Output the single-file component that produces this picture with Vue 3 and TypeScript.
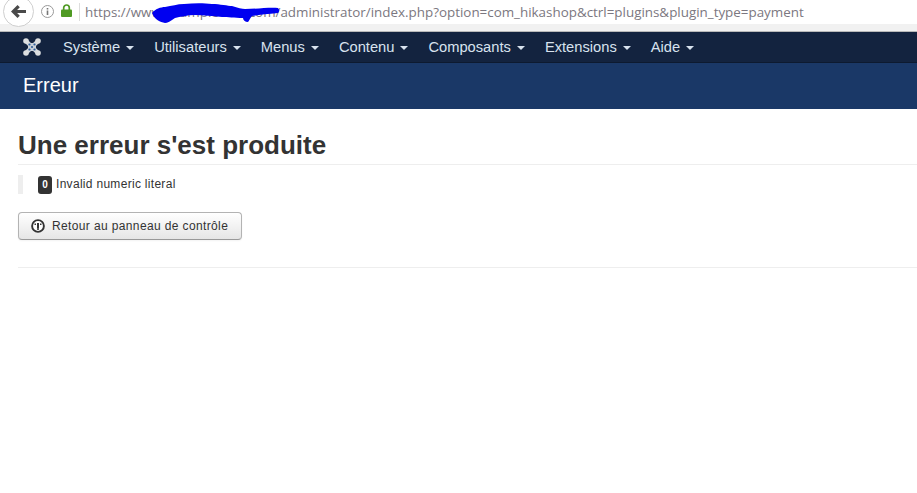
<script setup lang="ts">
const menus: string[] = ['Système', 'Utilisateurs', 'Menus', 'Contenu', 'Composants', 'Extensions', 'Aide']
</script>

<template>
  <div class="page">
    <div class="browser">
      <div class="back">
        <svg width="15" height="13" viewBox="0 0 15 13"><path d="M6.500 0 0 6.500 6.500 13l2.300-2.300-2.700-2.600H15V4.900H6.100l2.700-2.600z" fill="#4a4a4a" /></svg>
      </div>
      <svg class="info" width="13" height="13" viewBox="0 0 13 13">
        <circle cx="6.500" cy="6.500" r="6" fill="none" stroke="#999" stroke-width="1" />
        <rect x="5.700" y="5.500" width="1.600" height="4.500" fill="#777" />
        <rect x="5.700" y="3" width="1.600" height="1.500" fill="#777" />
      </svg>
      <svg class="lock" width="11" height="13" viewBox="0 0 11 13">
        <path d="M2.700 6V3.800a2.800 2.800 0 0 1 5.600 0V6" fill="none" stroke="#4f9a23" stroke-width="1.700" />
        <rect x="0" y="5.500" width="11" height="7.500" rx="1" fill="#4f9a23" />
      </svg>
      <span class="sep"></span>
      <div class="url">
        <span>https://www.example-site.com/administrator/index.php?option=com_hikashop&amp;ctrl=plugins&amp;plugin_type=payment</span>
        <svg class="scribble" width="130" height="24" viewBox="0 0 130 24">
          <path d="M0 13C3 9 9 7 13 7 20 6 25 4 32 4 42 3 52 3 60 4 68 4 76 6 80 6 86 8 90 9 93 9 105 9 118 7 126 8 128 10 127 12 126 13 115 14 106 15 100 16 98 18 97 21 96 22 93 22 91 20 91 18 82 18 76 17 70 17 60 16 52 15 43 15 35 15 28 17 23 18 19 21 15 23 13 23 8 22 3 20 0 13Z" fill="#0000f0" />
        </svg>
      </div>
    </div>
    <div class="strip"></div>
    <nav class="nav">
      <svg class="logo" width="18" height="18" viewBox="0 0 18 18">
        <path d="M3 3 15 15M15 3 3 15" stroke="#d5d8dc" stroke-width="4" fill="none" />
        <path d="M5 5h8v8H5z" fill="#c9d0d8" />
        <circle cx="3" cy="3" r="2.800" fill="#dcdee0" />
        <circle cx="15" cy="3" r="2.800" fill="#dcdee0" />
        <circle cx="3" cy="15" r="2.800" fill="#dcdee0" />
        <circle cx="15" cy="15" r="2.800" fill="#dcdee0" />
        <circle cx="6.500" cy="6.500" r="1.100" fill="#2f5f9c" />
        <circle cx="11.500" cy="6.500" r="1.100" fill="#2f5f9c" />
        <circle cx="6.500" cy="11.500" r="1.100" fill="#2f5f9c" />
        <circle cx="11.500" cy="11.500" r="1.100" fill="#2f5f9c" />
        <circle cx="9" cy="9" r="1.100" fill="#2f5f9c" />
      </svg>
      <ul class="menu">
        <li v-for="m in menus" :key="m">{{ m }}<span class="caret"></span></li>
      </ul>
    </nav>
    <header class="subhead">Erreur</header>
    <main class="content">
      <h1 class="title">Une erreur s'est produite</h1>
      <blockquote class="quote"><span class="badge">0</span> Invalid numeric literal</blockquote>
      <button class="btn" type="button">
        <svg width="14" height="14" viewBox="0 0 14 14">
          <circle cx="7" cy="7" r="5.900" fill="#fff" stroke="#333" stroke-width="1.900" />
          <path d="M3.500 5.200h7" stroke="#333" stroke-width="1.500" stroke-dasharray="1.500 1.250" />
          <path d="M7 4v5" stroke="#333" stroke-width="2" />
          <circle cx="7" cy="10" r="1.100" fill="#333" />
        </svg>
        Retour au panneau de contrôle
      </button>
      <hr class="rule" />
    </main>
  </div>
</template>

<style>
html, body { margin: 0; background: #fff; }
</style>

<style scoped>
.page {
  width: 917px;
  height: 493px;
  overflow: hidden;
  background: #fff;
  font-family: "Liberation Sans", Arial, sans-serif;
  color: #333;
}
.browser {
  height: 24px;
  display: flex;
  align-items: center;
  background: #fff;
  position: relative;
  z-index: 1;
}
.back {
  width: 31px;
  height: 31px;
  margin: -2px 0 0 3px;
  flex: none;
  box-sizing: border-box;
  border: 1px solid #cfcfcf;
  border-radius: 50%;
  background: #fff;
  display: flex;
  align-items: center;
  justify-content: center;
}
.info { margin-left: 7px; flex: none; margin-top: -2px; }
.lock { margin-left: 7px; margin-top: -3px; flex: none; }
.sep { width: 1px; height: 18px; background: #ddd; margin: -1px 0 0 7px; flex: none; }
.url {
  margin-left: 5px;
  font-family: "Open Sans", sans-serif;
  font-size: 13.400px;
  color: #7b7780;
  white-space: nowrap;
  position: relative;
  line-height: 24px;
}
.scribble { position: absolute; left: 67px; top: 0; }
.strip {
  height: 7px;
  background: #f1f1f1;
  border-bottom: 1px solid #b9b9b9;
}
.nav {
  height: 30px;
  background: #13233f;
  border-bottom: 1px solid #0d1a30;
  display: flex;
  align-items: center;
  padding-left: 23px;
}
.logo { flex: none; }
.menu {
  list-style: none;
  margin: 0 0 0 22px;
  padding: 0;
  display: flex;
  gap: 20px;
}
.menu li {
  font-size: 14.700px;
  color: #d8e2ee;
  display: flex;
  align-items: center;
  white-space: nowrap;
}
.caret {
  width: 0;
  height: 0;
  margin-left: 6px;
  margin-top: 1px;
  border-left: 4px solid transparent;
  border-right: 4px solid transparent;
  border-top: 4px solid #d8e2ee;
}
.subhead {
  height: 46px;
  background: #1a3867;
  color: #fff;
  font-size: 20px;
  line-height: 45px;
  padding-left: 23px;
}
.content { padding: 19px 0 0 18px; }
.title {
  margin: 0;
  font-size: 26px;
  line-height: 34px;
  font-weight: 700;
  color: #333;
  padding-bottom: 2px;
  border-bottom: 1px solid #eee;
}
.quote {
  margin: 10px 0 0;
  height: 19px;
  border-left: 5px solid #eee;
  padding-left: 15px;
  font-size: 12px;
  letter-spacing: 0.300px;
  line-height: 19px;
  color: #333;
  display: flex;
  align-items: center;
  gap: 4px;
}
.badge {
  width: 14px;
  height: 18px;
  border-radius: 3px;
  background: #333;
  color: #fff;
  font-size: 10px;
  font-weight: 700;
  text-align: center;
  line-height: 18px;
  letter-spacing: 0;
}
.btn {
  display: flex;
  align-items: center;
  gap: 7px;
  margin-top: 18px;
  height: 28px;
  width: 224px;
  box-sizing: border-box;
  padding: 0 12px;
  border: 1px solid #b3b3b3;
  border-bottom-color: #999;
  border-radius: 4px;
  background: linear-gradient(#fff, #e6e6e6);
  box-shadow: 0 1px 2px rgba(0, 0, 0, 0.05);
  font-family: "Liberation Sans", Arial, sans-serif;
  font-size: 12px;
  color: #333;
  letter-spacing: 0.370px;
}
.rule {
  margin: 27px 0 0;
  border: 0;
  border-top: 1px solid #eee;
}
</style>
